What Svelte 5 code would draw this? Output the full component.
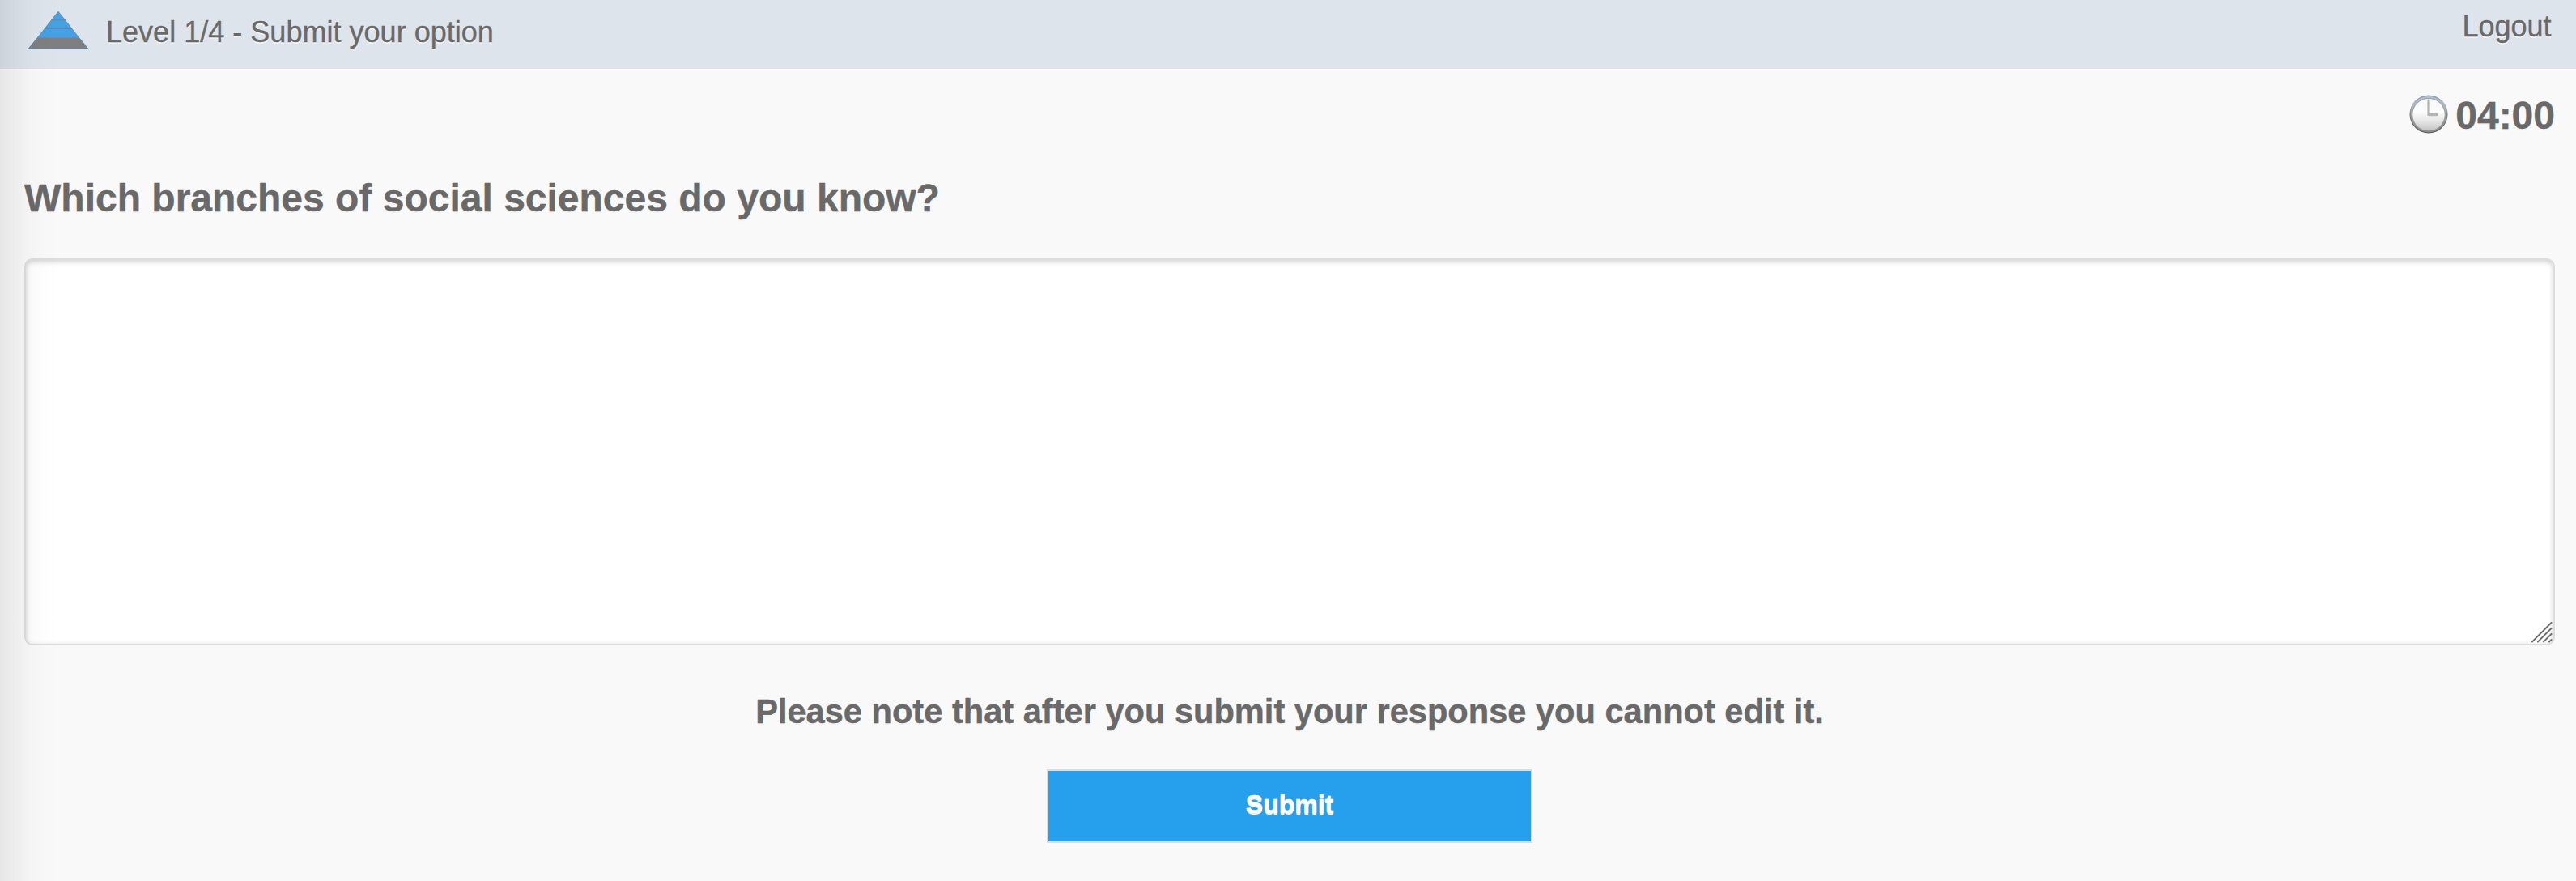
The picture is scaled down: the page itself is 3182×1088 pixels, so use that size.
<script>
  let answer = $state('');
  const level = 1;
  const levels = 4;
  const timeLeft = '04:00';
</script>

<div class="page">
  <header class="bar">
    <svg class="logo" viewBox="0 0 76 50" aria-hidden="true">
      <polygon points="38,2 75,48.3 1,48.3" fill="#45a1e3" />
      <polygon points="12.4,34.2 63.6,34.2 75,48.3 1,48.3" fill="#7f7f7f" />
      <path d="M29.6 12.6H46.6M21.4 23.5H54.8" stroke="#6f8798" stroke-width="1.1" />
      <path d="M12.4 34.4 38 2 63.6 34.4" fill="none" stroke="#7089a3" stroke-width=".7" />
      <path d="M12.4 34.4H63.6L75 48.3H1Z" fill="none" stroke="#5b94cc" stroke-width=".8" />
    </svg>
    <h1 class="title">Level {level}/{levels} - Submit your option</h1>
    <a class="logout" href="#logout">Logout</a>
  </header>

  <main class="content">
    <div class="timer">
      <svg class="clock" viewBox="0 0 48 48" aria-hidden="true">
        <defs>
          <linearGradient id="rim" x1="0" y1="0" x2="0" y2="1">
            <stop offset="0" stop-color="#8b9db3" />
            <stop offset=".25" stop-color="#a9bacb" />
            <stop offset=".5" stop-color="#85888c" />
            <stop offset="1" stop-color="#5c5c5c" />
          </linearGradient>
          <linearGradient id="ring" x1="0" y1="0" x2="0" y2="1">
            <stop offset="0" stop-color="#b4c4d4" />
            <stop offset=".5" stop-color="#a6a6a6" />
            <stop offset="1" stop-color="#858585" />
          </linearGradient>
          <linearGradient id="face" x1="0" y1="0" x2="0" y2="1">
            <stop offset="0" stop-color="#f6f6f6" />
            <stop offset=".4" stop-color="#fdfdfd" />
            <stop offset=".7" stop-color="#e6e6e6" />
            <stop offset="1" stop-color="#c2c2c2" />
          </linearGradient>
        </defs>
        <circle cx="24" cy="24" r="23.6" fill="url(#rim)" />
        <circle cx="24" cy="24.2" r="22.2" fill="url(#ring)" />
        <circle cx="24" cy="24.6" r="20.2" fill="url(#face)" stroke="#8f9296" stroke-width=".8" />
        <path d="M24 6.8V24.6H34.2" fill="none" stroke="#b3b3b3" stroke-width="3.2" stroke-linecap="round" stroke-linejoin="round" />
      </svg>
      <span class="time">{timeLeft}</span>
    </div>

    <h2 class="question">Which branches of social sciences do you know?</h2>

    <div class="field">
      <textarea class="answer" bind:value={answer} aria-label="Your answer"></textarea>
      <svg class="grip" viewBox="0 0 26 26" aria-hidden="true">
        <path d="M1 24.5 24.5 1M8 24.5 24.5 8M15 24.5 24.5 15M22 24.5 24.5 22" stroke="#6e6e6e" stroke-width="1.9" stroke-linecap="square" />
      </svg>
    </div>

    <p class="note">Please note that after you submit your response you cannot edit it.</p>
    <button class="submit" type="button">Submit</button>
  </main>

  <div class="edge"></div>
</div>

<style>
  :global(body) {
    margin: 0;
    background: #f9f9f9;
  }

  .page {
    position: relative;
    box-sizing: border-box;
    height: 1088px;
    overflow: hidden;
    background: #f9f9f9;
    color: #696969;
    font-family: "Liberation Sans", Arial, sans-serif;
    text-shadow: 0 2px 0 #f3f3f3;
    -webkit-text-stroke: 0.4px currentColor;
  }

  .bar {
    display: flex;
    align-items: flex-start;
    box-sizing: border-box;
    height: 85px;
    padding: 0 30.5px 0 34px;
    background: #dee4ec;
    font-size: 36px;
  }

  .logo {
    width: 76px;
    height: 50px;
    margin-top: 12px;
  }

  .title {
    margin: 0 0 0 21px;
    font-size: 36px;
    font-weight: 400;
    line-height: 80px;
    letter-spacing: 0.02px;
  }

  .logout {
    margin-left: auto;
    color: inherit;
    line-height: 66px;
    text-decoration: none;
  }

  .content {
    display: flex;
    flex-direction: column;
    padding: 28px 26px 0 30px;
  }

  .timer {
    display: flex;
    justify-content: flex-end;
    gap: 9.5px;
    height: 60px;
    font-size: 48px;
    font-weight: 700;
    line-height: 60px;
  }

  .clock {
    width: 48px;
    height: 48px;
    margin-top: 4px;
  }

  .question {
    margin: 42px 0 44px;
    font-size: 48px;
    font-weight: 700;
    line-height: 60px;
  }

  .field {
    position: relative;
    display: flex;
    height: 478px;
  }

  .answer {
    box-sizing: border-box;
    flex: 1;
    padding: 16px;
    border: 2px solid #ddd;
    border-radius: 10px;
    outline: none;
    background: #fff;
    box-shadow: inset 0 2px 6px rgba(0, 0, 0, 0.2);
    color: inherit;
    font: inherit;
    font-size: 32px;
    resize: none;
  }

  .grip {
    position: absolute;
    right: 3px;
    bottom: 3px;
    width: 26px;
    height: 26px;
  }

  .note {
    margin: 52px 0 41px;
    font-size: 41.6px;
    font-weight: 700;
    line-height: 60px;
    text-align: center;
  }

  .submit {
    align-self: center;
    box-sizing: border-box;
    width: 600px;
    height: 91px;
    padding: 0 0 5px;
    border: 2px solid #ddd;
    border-radius: 0;
    background: #269fed;
    color: #fff;
    font: inherit;
    font-size: 32px;
    font-weight: 700;
    text-shadow: 0 2px 0 #f3f3f3;
  }

  .edge {
    position: absolute;
    inset: 0 auto 0 0;
    width: 80px;
    background: linear-gradient(
      to right,
      rgba(0, 0, 0, 0.075),
      rgba(0, 0, 0, 0.042) 25%,
      rgba(0, 0, 0, 0.016) 50%,
      rgba(0, 0, 0, 0.004) 75%,
      transparent
    );
    pointer-events: none;
  }
</style>
